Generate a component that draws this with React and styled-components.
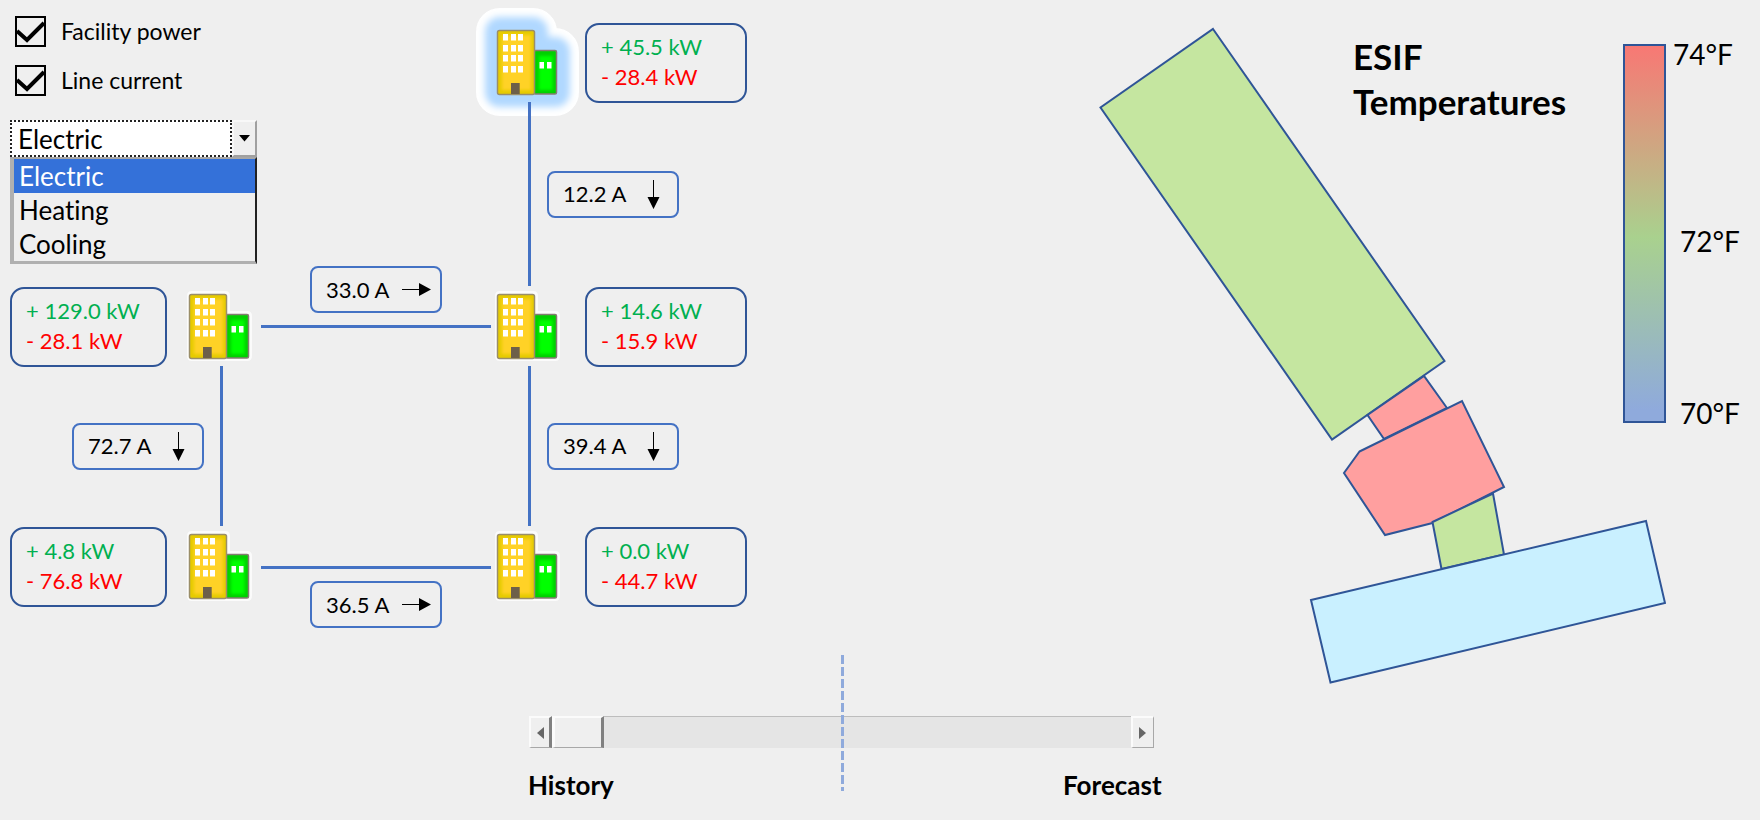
import React, { useState } from "react";
import styled, { createGlobalStyle, css } from "styled-components";

const GlobalStyle = createGlobalStyle`
  *, *::before, *::after { box-sizing: border-box; }
  body {
    margin: 0;
    background: #efefef;
    color: #000;
    font: 22px/30px Lato, "Liberation Sans", sans-serif;
    font-variant-ligatures: none;
  }
`;

const Page = styled.div`
  display: flex;
  flex-direction: column;
  min-height: 100vh;
`;

const Panels = styled.main`
  display: flex;
  align-items: flex-start;
`;

/* ---------- Network ---------- */

const Network = styled.section`
  display: grid;
  flex: none;
  grid-template-columns: 157px 16px 78px 230px 78px 16px 162px;
  grid-template-rows: 80px 184px 80px 160px 80px auto;
  padding: 23px 0 0 10px;
`;

const Controls = styled.form`
  grid-area: 1 / 1 / 3 / 4;
  display: flex;
  flex-direction: column;
  gap: 18px;
  width: 247px;
  margin-top: -7px;
`;

const CheckLabel = styled.label`
  display: flex;
  align-items: flex-start;
  gap: 15px;
  padding-left: 5px;
  font-size: 23px;
`;

const CheckBox = styled.span`
  display: grid;
  width: 31px;
  height: 31px;

  > * { grid-area: 1 / 1; }
  svg { pointer-events: none; visibility: hidden; }
  input:checked + svg { visibility: visible; }
`;

const CheckInput = styled.input`
  appearance: none;
  margin: 0;
  border: 2px solid #000;
`;

const Combo = styled.div`
  margin-top: 6px;
  font-size: 26px;
`;

const ComboFace = styled.div`
  display: grid;
  grid-template-columns: 1fr 25px;
  height: 37px;
`;

const ComboSelect = styled.select`
  appearance: none;
  grid-area: 1 / 1 / 2 / 2;
  padding: 0 6px;
  border: 2px dotted #222;
  border-radius: 0;
  background: #fff;
  color: #000;
  font: inherit;
  font-variant-ligatures: none;
`;

const ComboButton = styled.button`
  display: grid;
  place-items: center;
  padding: 0;
  border: 2px solid;
  border-color: #f8f8f8 #a0a0a0 #a0a0a0 #f8f8f8;
  background: #efefef;
`;

const ComboList = styled.ul`
  margin: 0;
  padding: 0;
  list-style: none;
  border: solid;
  border-width: 2px 2px 3px 4px;
  border-color: #a6a6a6 #222 #b0b0b0 #b0b0b0;
`;

const ComboOption = styled.li`
  padding-left: 5px;
  line-height: 34px;
  background: ${(p) => (p.$active ? "#3471d9" : "transparent")};
  color: ${(p) => (p.$active ? "#fff" : "#000")};
`;

const BuildingIcon = styled.svg`
  grid-area: ${(p) => p.$row} / ${(p) => p.$col};
  width: 72px;
  height: 80px;
  overflow: visible;
`;

const Readout = styled.div`
  grid-area: ${(p) => p.$row} / ${(p) => p.$col};
  padding: 7px 14px;
  border: 2px solid #2f5597;
  border-radius: 14px;
`;

const Supply = styled.div`
  color: #00b050;
`;

const Demand = styled.div`
  color: #f00;
`;

const VerticalLink = styled.div`
  display: flex;
  align-items: center;
  gap: 16px;
  margin: -1px 0 1px;
  ${(p) =>
    p.$side === "left"
      ? css`
          grid-area: ${p.$row} / 1 / auto / 4;
          flex-direction: row-reverse;
          padding-right: 38px;
        `
      : css`
          grid-area: ${p.$row} / 5 / auto / 8;
          padding-left: 37px;
        `}

  &::before {
    content: "";
    align-self: stretch;
    width: 3px;
    background: #4472c4;
  }
`;

const HorizontalLink = styled.div`
  display: flex;
  align-items: center;
  gap: 12px;
  ${(p) =>
    p.$label === "above"
      ? css`
          grid-area: 2 / 4 / 4 / 5;
          flex-direction: column-reverse;
          padding-bottom: 39px;
        `
      : css`
          grid-area: 5 / 4 / 7 / 5;
          flex-direction: column;
          padding-top: 39px;
        `}

  &::before {
    content: "";
    width: 100%;
    height: 3px;
    background: #4472c4;
  }
`;

const CurrentTag = styled.div`
  display: flex;
  align-items: center;
  justify-content: space-between;
  width: 132px;
  height: 47px;
  padding: 0 8px 0 14px;
  border: 2px solid #4472c4;
  border-radius: 8px;
`;

/* ---------- Temperatures ---------- */

const Thermal = styled.section`
  display: grid;
  flex: 1;
  justify-items: end;

  > * { grid-area: 1 / 1; }
`;

const FloorPlan = styled.svg`
  width: 567px;
  height: 658px;
  margin: 27px 94px 0 0;
`;

const ThermalHeader = styled.header`
  display: flex;
  align-items: flex-start;
  gap: 30px;
`;

const Title = styled.h1`
  width: 240px;
  margin: 34px 0 0;
  font-size: 35px;
  line-height: 45px;
`;

const Legend = styled.div`
  display: flex;
  gap: 7px;
  margin-top: 44px;
`;

const LegendBar = styled.div`
  width: 43px;
  height: 379px;
  border: 2px solid #2f5597;
  background: linear-gradient(#f87874, #a9d18e 51%, #8faadc 97%);
`;

const LegendScale = styled.div`
  display: grid;
  grid-template-rows: 187px 172px 34px;
  width: 87px;
  margin: -7px 0;
  font-size: 28px;
  line-height: 34px;

  > :not(:first-child) { padding-left: 7px; }
`;

/* ---------- Timeline ---------- */

const Timeline = styled.section`
  width: 36%;
  margin: 31px 0 0 30%;
`;

const Scrubber = styled.div`
  position: relative;
  display: flex;
  height: 32px;
  margin: 0 8px 0 1px;

  &::after {
    content: "";
    position: absolute;
    top: -61px;
    left: 50%;
    width: 3px;
    height: 136px;
    background: repeating-linear-gradient(#8faadc 0 9px, transparent 9px 12px);
    pointer-events: none;
  }
`;

const StepButton = styled.button`
  display: grid;
  place-items: center;
  width: 23px;
  padding: 0;
  border: solid;
  border-width: 2px ${(p) => (p.$heavy ? "3px" : "1px")} 1px 2px;
  border-color: #fbfbfb ${(p) => (p.$heavy ? "#808080" : "#a8a8a8")} #a8a8a8 #fbfbfb;
  background: #efefef;
`;

const Range = styled.input`
  appearance: none;
  flex: 1;
  min-width: 0;
  height: 32px;
  margin: 0;
  border-top: 1px solid #bdbdbd;
  background: #e5e5e5;

  &::-webkit-slider-thumb {
    appearance: none;
    width: 52px;
    height: 32px;
    margin-top: -1px;
    border: solid;
    border-width: 2px 3px 1px 3px;
    border-color: #fbfbfb #808080 #a8a8a8 #fbfbfb;
    background: #efefef;
  }
`;

const TimelineLabels = styled.div`
  display: flex;
  justify-content: space-between;
  margin-top: 22px;
  font-size: 26px;
  font-weight: 700;
`;

function Check({ children }) {
  return (
    <CheckLabel>
      <CheckBox>
        <CheckInput type="checkbox" defaultChecked />
        <svg width="31" height="31" fill="none" stroke="#000" strokeWidth="4" aria-hidden="true">
          <path d="M2 15 12 24 29 7" />
        </svg>
      </CheckBox>
      {children}
    </CheckLabel>
  );
}

const SYSTEMS = ["Electric", "Heating", "Cooling"];

function SystemPicker() {
  const [system, setSystem] = useState("Electric");
  return (
    <Combo>
      <ComboFace>
        <ComboSelect aria-label="System" value={system} onChange={(e) => setSystem(e.target.value)}>
          {SYSTEMS.map((s) => (
            <option key={s}>{s}</option>
          ))}
        </ComboSelect>
        <ComboButton type="button" aria-label="Toggle system list">
          <svg width="11" height="7" aria-hidden="true">
            <path d="M0 0h11L5.5 6.5z" />
          </svg>
        </ComboButton>
      </ComboFace>
      <ComboList role="listbox" aria-label="System options">
        {SYSTEMS.map((s) => (
          <ComboOption
            key={s}
            role="option"
            aria-selected={s === system}
            $active={s === system}
            onClick={() => setSystem(s)}
          >
            {s}
          </ComboOption>
        ))}
      </ComboList>
    </Combo>
  );
}

const OUTLINE = "M7 9q0-2 2-2h33q2 0 2 2v18h20q2 0 2 2v40q0 2-2 2H9q-2 0-2-2z";

function Building({ row, col, selected }) {
  return (
    <BuildingIcon $row={row} $col={col} viewBox="0 0 72 80" role="img" aria-label="Facility">
      <defs>
        <filter id="soft" x="-30%" y="-30%" width="160%" height="160%">
          <feGaussianBlur stdDeviation="1.6" />
        </filter>
        <filter id="halo" x="-60%" y="-60%" width="220%" height="220%">
          <feGaussianBlur stdDeviation="3.5" />
        </filter>
      </defs>
      {selected ? (
        <g strokeLinejoin="round">
          <path d={OUTLINE} fill="#fff" stroke="#fff" strokeWidth="44" />
          <path d={OUTLINE} fill="#b0d8ff" stroke="#b0d8ff" strokeWidth="26" filter="url(#halo)" />
        </g>
      ) : (
        <path d={OUTLINE} fill="#fff" stroke="#fbfbfb" strokeWidth="6" strokeLinejoin="round" />
      )}
      <rect x="43" y="27.5" width="22.5" height="43.5" rx="1.5" fill="#00d000" stroke="#857b72" strokeWidth="1.5" />
      <rect x="48" y="33" width="13.5" height="34" fill="#0f0" filter="url(#soft)" />
      <rect x="6.5" y="7.5" width="37" height="64" rx="2" fill="#e6cb00" stroke="#9a8e6a" strokeWidth="1.5" />
      <rect x="11" y="12" width="29" height="55" fill="#ffd228" filter="url(#soft)" />
      <g fill="#fff">
        {[11, 22, 32, 43].map((y) =>
          [12, 20, 27].map((x) => <rect key={`${x}-${y}`} x={x} y={y} width="5" height="6.5" />)
        )}
        <rect x="48.5" y="39" width="4.5" height="6.5" />
        <rect x="56" y="39" width="4.5" height="6.5" />
      </g>
      <rect x="20" y="60" width="8.7" height="11" fill="#6e6049" />
    </BuildingIcon>
  );
}

function Power({ row, col, supply, demand }) {
  return (
    <Readout $row={row} $col={col}>
      <Supply>+ {supply} kW</Supply>
      <Demand>- {demand} kW</Demand>
    </Readout>
  );
}

function Current({ amps, direction }) {
  return (
    <CurrentTag>
      {amps} A
      <svg width="30" height="30" role="img" aria-label={`Flow ${direction}`}>
        {direction === "down" ? (
          <path d="M14 1h1v17h5.500L14.500 30 8.500 18H14z" />
        ) : (
          <path d="M0 14v1h17v6l12-6.500L17 8v6z" />
        )}
      </svg>
    </CurrentTag>
  );
}

export default function App() {
  return (
    <Page>
      <GlobalStyle />
      <Panels>
        <Network aria-label="Power network">
          <Controls>
            <Check>Facility power</Check>
            <Check>Line current</Check>
            <SystemPicker />
          </Controls>

          <Building row={1} col={5} selected />
          <Building row={3} col={3} />
          <Building row={3} col={5} />
          <Building row={5} col={3} />
          <Building row={5} col={5} />

          <Power row={1} col={7} supply="45.5" demand="28.4" />
          <Power row={3} col={1} supply="129.0" demand="28.1" />
          <Power row={3} col={7} supply="14.6" demand="15.9" />
          <Power row={5} col={1} supply="4.8" demand="76.8" />
          <Power row={5} col={7} supply="0.0" demand="44.7" />

          <VerticalLink $row={2} $side="right">
            <Current amps="12.2" direction="down" />
          </VerticalLink>
          <VerticalLink $row={4} $side="left">
            <Current amps="72.7" direction="down" />
          </VerticalLink>
          <VerticalLink $row={4} $side="right">
            <Current amps="39.4" direction="down" />
          </VerticalLink>
          <HorizontalLink $label="above">
            <Current amps="33.0" direction="right" />
          </HorizontalLink>
          <HorizontalLink $label="below">
            <Current amps="36.5" direction="right" />
          </HorizontalLink>
        </Network>

        <Thermal aria-label="ESIF temperatures">
          <FloorPlan viewBox="1099 27 567 658" role="img" aria-label="Floor plan by temperature">
            <g stroke="#2f5597" strokeWidth="2">
              <path d="M1213 29 1444.500 361 1332 439.500 1100.500 107.500z" fill="#c5e6a0" />
              <path d="M1367.500 415 1424 376 1447 408 1384 439z" fill="#ff9f9f" />
              <path d="M1359.500 451.500 1462 401 1504 487 1432.500 523 1385 535 1344 473z" fill="#ff9f9f" />
              <path d="M1432.500 522 1493 493.500 1504 554.500 1441.500 569z" fill="#c5e6a0" />
              <path d="M1311 600 1646 521 1665 603 1330.500 682.500z" fill="#c9f0ff" />
            </g>
          </FloorPlan>
          <ThermalHeader>
            <Title>
              ESIF
              <br />
              Temperatures
            </Title>
            <Legend>
              <LegendBar />
              <LegendScale>
                <span>74°F</span>
                <span>72°F</span>
                <span>70°F</span>
              </LegendScale>
            </Legend>
          </ThermalHeader>
        </Thermal>
      </Panels>

      <Timeline aria-label="Timeline">
        <Scrubber>
          <StepButton type="button" aria-label="Earlier" $heavy>
            <svg width="7" height="12" fill="#666" aria-hidden="true">
              <path d="M7 0v12L0 6z" />
            </svg>
          </StepButton>
          <Range type="range" min="0" max="100" defaultValue="0" aria-label="Time" />
          <StepButton type="button" aria-label="Later">
            <svg width="7" height="12" fill="#666" aria-hidden="true">
              <path d="M0 0v12l7-6z" />
            </svg>
          </StepButton>
        </Scrubber>
        <TimelineLabels>
          <span>History</span>
          <span>Forecast</span>
        </TimelineLabels>
      </Timeline>
    </Page>
  );
}
